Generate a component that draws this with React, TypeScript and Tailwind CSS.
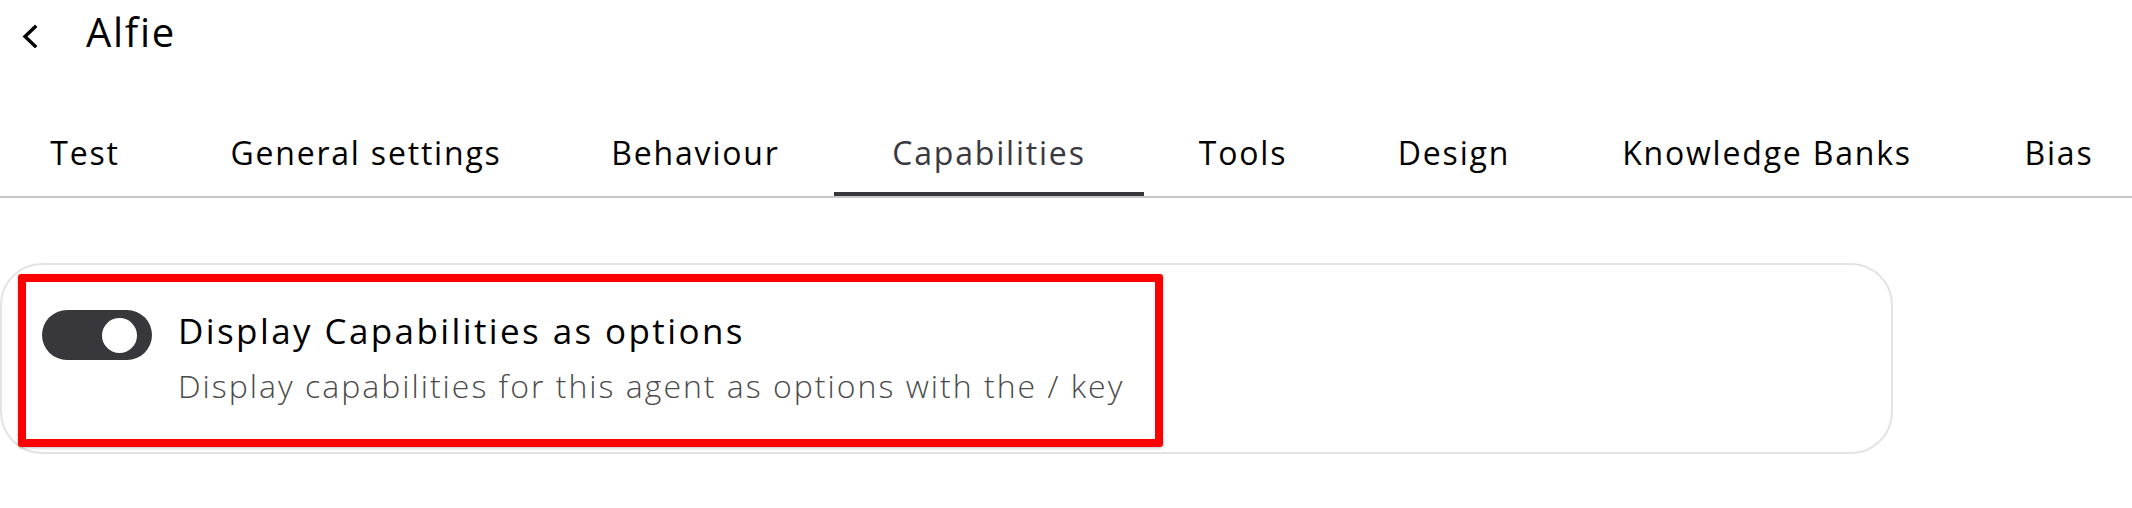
import React from "react";

const tabs = [
  { label: "Test", w: 180 },
  { label: "General settings", w: 382 },
  { label: "Behaviour", w: 277 },
  { label: "Capabilities", w: 310, active: true },
  { label: "Tools", w: 198 },
  { label: "Design", w: 224 },
  { label: "Knowledge Banks", w: 402 },
  { label: "Bias", w: 182 },
];

export default function App() {
  return (
    <div
      className="w-[2132px] h-[508px] bg-white overflow-hidden text-black"
      style={{ fontFamily: '"Open Sans", "Noto Sans", sans-serif' }}
    >
      {/* Header */}
      <div className="h-[72px] flex items-center">
        <svg
          className="ml-[21px] -mt-[1px]"
          width="18"
          height="24"
          viewBox="0 0 18 24"
          fill="none"
        >
          <polyline
            points="14,3 4,12.5 14,22"
            stroke="#000"
            strokeWidth="3.4"
            strokeLinecap="square"
            strokeLinejoin="miter"
          />
        </svg>
        <span className="ml-[47px] -mt-[8px] text-[40px] leading-[48px] font-medium tracking-[1.7px]">
          Alfie
        </span>
      </div>

      {/* Tabs */}
      <div className="mt-[48px] border-b-2 border-[#c8c8c8] overflow-hidden">
        <div className="flex -ml-[5px] w-max">
          {tabs.map((t) => (
            <div
              key={t.label}
              className={
                "h-[76px] flex items-center justify-center shrink-0 " +
                (t.active ? "border-b-[4px] border-[#37363b] pt-[4px]" : "")
              }
              style={{ width: t.w }}
            >
              <span
                className={
                  "text-[32px] leading-[40px] -mt-[10px] whitespace-nowrap tracking-[1.8px] " +
                  (t.active ? "text-[#3a393f]" : "text-black")
                }
              >
                {t.label}
              </span>
            </div>
          ))}
        </div>
      </div>

      {/* Card */}
      <div className="mt-[65px] w-[1893px] h-[191px] rounded-[42px] border-2 border-[#e3e3e3] relative">
        <div className="flex items-start pl-[40px] pt-[45px]">
          <div className="w-[110px] h-[50px] rounded-full bg-[#38373c] flex items-center justify-end pr-[15px] shrink-0">
            <div className="w-[35px] h-[35px] rounded-full bg-white" />
          </div>
          <div className="ml-[26px] -mt-[1px] flex flex-col">
            <span className="text-[35px] leading-[44px] text-black whitespace-nowrap tracking-[2.4px]">
              Display Capabilities as options
            </span>
            <span className="mt-[13px] text-[32px] leading-[40px] font-light text-[#4a4a4a] whitespace-nowrap tracking-[2px]">
              Display capabilities for this agent as options with the / key
            </span>
          </div>
        </div>
        {/* Annotation box */}
        <div className="absolute left-[16px] top-[9px] w-[1145px] h-[173px] border-[8px] border-[#ff0000] rounded-[3px] shadow-[0_1px_3px_rgba(0,0,0,0.25)]" />
      </div>
    </div>
  );
}
